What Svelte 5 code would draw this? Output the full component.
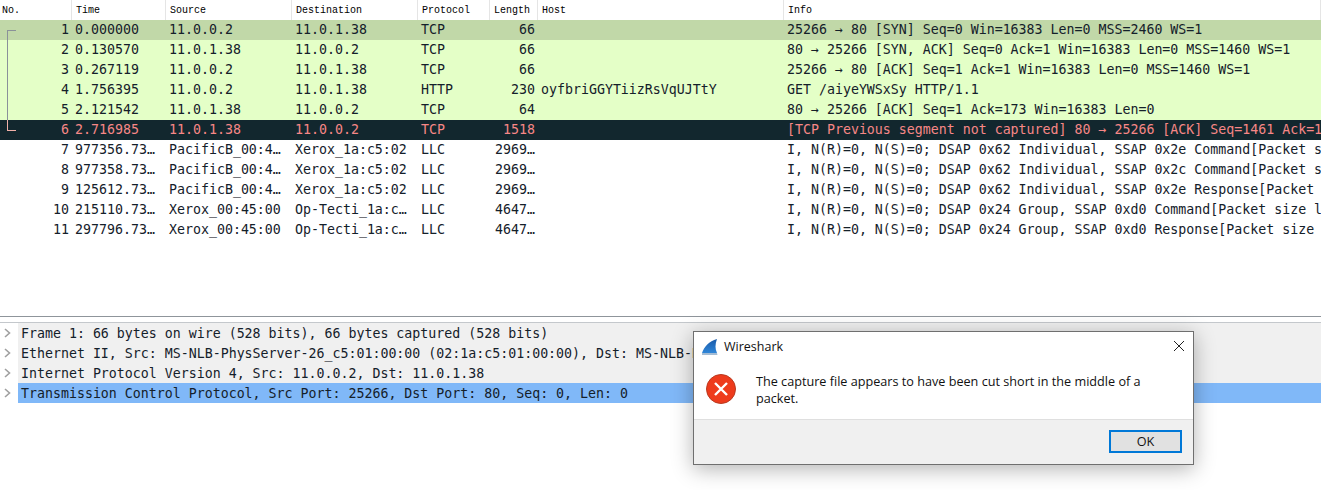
<script>
  const columns = [
    { label: 'No.', width: 72 },
    { label: 'Time', width: 94 },
    { label: 'Source', width: 126 },
    { label: 'Destination', width: 126 },
    { label: 'Protocol', width: 72 },
    { label: 'Length', width: 48 },
    { label: 'Host', width: 246 },
    { label: 'Info', width: 537 }
  ]

  const packets = [
    { no: 1, time: '0.000000', src: '11.0.0.2', dst: '11.0.1.38', proto: 'TCP', len: '66', host: '', info: '25266 → 80 [SYN] Seq=0 Win=16383 Len=0 MSS=2460 WS=1', kind: 'selected' },
    { no: 2, time: '0.130570', src: '11.0.1.38', dst: '11.0.0.2', proto: 'TCP', len: '66', host: '', info: '80 → 25266 [SYN, ACK] Seq=0 Ack=1 Win=16383 Len=0 MSS=1460 WS=1', kind: 'green' },
    { no: 3, time: '0.267119', src: '11.0.0.2', dst: '11.0.1.38', proto: 'TCP', len: '66', host: '', info: '25266 → 80 [ACK] Seq=1 Ack=1 Win=16383 Len=0 MSS=1460 WS=1', kind: 'green' },
    { no: 4, time: '1.756395', src: '11.0.0.2', dst: '11.0.1.38', proto: 'HTTP', len: '230', host: 'oyfbriGGYTiizRsVqUJTtY', info: 'GET /aiyeYWSxSy HTTP/1.1', kind: 'green' },
    { no: 5, time: '2.121542', src: '11.0.1.38', dst: '11.0.0.2', proto: 'TCP', len: '64', host: '', info: '80 → 25266 [ACK] Seq=1 Ack=173 Win=16383 Len=0', kind: 'green' },
    { no: 6, time: '2.716985', src: '11.0.1.38', dst: '11.0.0.2', proto: 'TCP', len: '1518', host: '', info: '[TCP Previous segment not captured] 80 → 25266 [ACK] Seq=1461 Ack=173 Win=16383 Len=1460', kind: 'bad' },
    { no: 7, time: '977356.73…', src: 'PacificB_00:4…', dst: 'Xerox_1a:c5:02', proto: 'LLC', len: '2969…', host: '', info: 'I, N(R)=0, N(S)=0; DSAP 0x62 Individual, SSAP 0x2e Command[Packet size limited during capture]', kind: '' },
    { no: 8, time: '977358.73…', src: 'PacificB_00:4…', dst: 'Xerox_1a:c5:02', proto: 'LLC', len: '2969…', host: '', info: 'I, N(R)=0, N(S)=0; DSAP 0x62 Individual, SSAP 0x2c Command[Packet size limited during capture]', kind: '' },
    { no: 9, time: '125612.73…', src: 'PacificB_00:4…', dst: 'Xerox_1a:c5:02', proto: 'LLC', len: '2969…', host: '', info: 'I, N(R)=0, N(S)=0; DSAP 0x62 Individual, SSAP 0x2e Response[Packet size limited during capture]', kind: '' },
    { no: 10, time: '215110.73…', src: 'Xerox_00:45:00', dst: 'Op-Tecti_1a:c…', proto: 'LLC', len: '4647…', host: '', info: 'I, N(R)=0, N(S)=0; DSAP 0x24 Group, SSAP 0xd0 Command[Packet size limited during capture]', kind: '' },
    { no: 11, time: '297796.73…', src: 'Xerox_00:45:00', dst: 'Op-Tecti_1a:c…', proto: 'LLC', len: '4647…', host: '', info: 'I, N(R)=0, N(S)=0; DSAP 0x24 Group, SSAP 0xd0 Response[Packet size limited during capture]', kind: '' }
  ]

  const details = [
    'Frame 1: 66 bytes on wire (528 bits), 66 bytes captured (528 bits)',
    'Ethernet II, Src: MS-NLB-PhysServer-26_c5:01:00:00 (02:1a:c5:01:00:00), Dst: MS-NLB-PhysServer-26_c5:01:00:00',
    'Internet Protocol Version 4, Src: 11.0.0.2, Dst: 11.0.1.38',
    'Transmission Control Protocol, Src Port: 25266, Dst Port: 80, Seq: 0, Len: 0'
  ]
</script>

<div class="window">
  <section class="list">
    <div class="grid head">
      {#each columns as col}
        <div class="th" style="width: {col.width}px">{col.label}</div>
      {/each}
    </div>
    {#each packets as p}
      <div class="grid row {p.kind}">
        <div class="td num" style="width: 72px">
          {#if p.no === 1}<span class="conv first"></span>{/if}
          {#if p.no > 1 && p.no < 6}<span class="conv mid"></span>{/if}
          {#if p.no === 6}<span class="conv last"></span>{/if}
          {p.no}
        </div>
        <div class="td" style="width: 94px">{p.time}</div>
        <div class="td" style="width: 126px">{p.src}</div>
        <div class="td" style="width: 126px">{p.dst}</div>
        <div class="td" style="width: 72px">{p.proto}</div>
        <div class="td len" style="width: 48px">{p.len}</div>
        <div class="td" style="width: 246px">{p.host}</div>
        <div class="td" style="width: 537px">{p.info}</div>
      </div>
    {/each}
  </section>

  <div class="splitter"></div>

  <section class="details">
    {#each details as line, i}
      <div class="detail">
        <svg class="arrow" width="18" height="20" viewBox="0 0 18 20">
          <path d="M5 6l4.500 4-4.500 4" fill="none" stroke="#a0a0a0" stroke-width="1.600" />
        </svg>
        <div class="detail-text" class:active={i === 3}>{line}</div>
      </div>
    {/each}
  </section>

  <div class="dialog">
    <div class="titlebar">
      <svg class="fin" width="16" height="16" viewBox="0 0 16 16">
        <defs>
          <linearGradient id="finfill" x1="0" y1="0" x2="0" y2="1">
            <stop offset="0" stop-color="#1a5aa8" />
            <stop offset="1" stop-color="#2f86d8" />
          </linearGradient>
        </defs>
        <path d="M0 14C2 8 7 2 15 0C13 5 13 10 15 14Z" fill="url(#finfill)" />
        <path d="M0 14H15L15.500 16H0Z" fill="#a4bcd4" />
      </svg>
      <span>Wireshark</span>
      <svg class="close" width="12" height="12" viewBox="0 0 12 12">
        <path d="M1 1l10 10M11 1L1 11" stroke="#222" stroke-width="1" fill="none" />
      </svg>
    </div>
    <div class="body">
      <svg class="err" width="32" height="32" viewBox="0 0 32 32">
        <circle cx="16" cy="16" r="14.500" fill="#ee3b1c" stroke="#b93a20" stroke-width="1" />
        <path d="M10 10l12 12M22 10L10 22" stroke="#fff" stroke-width="2.400" fill="none" />
      </svg>
      <p>The capture file appears to have been cut short in the middle of a packet.</p>
    </div>
    <div class="footer">
      <div class="ok">OK</div>
    </div>
  </div>
</div>

<style>
  :global(body) {
    margin: 0;
    background: #fff;
  }
  .window {
    position: relative;
    width: 1321px;
    height: 490px;
    overflow: hidden;
    font-family: "DejaVu Sans Mono", "Liberation Mono", monospace;
    font-size: 13.280px;
    color: #14202a;
  }
  .list {
    height: 316px;
  }
  .grid {
    display: flex;
    height: 20px;
    white-space: nowrap;
  }
  .th {
    box-sizing: border-box;
    flex: none;
    padding-left: 4px;
    font-family: "Liberation Mono", monospace;
    font-size: 10px;
    line-height: 21px;
    color: #000;
    border-right: 1px solid #e5e5e5;
  }
  .th:first-child {
    padding-left: 2px;
  }
  .td {
    position: relative;
    box-sizing: border-box;
    flex: none;
    overflow: hidden;
    padding-left: 3px;
    line-height: 20px;
  }
  .num,
  .len {
    padding: 0 3px 0 0;
    text-align: right;
  }
  .row.green {
    background: #e4ffc7;
  }
  .row.selected {
    background: #c1d8a8;
  }
  .row.bad {
    background: #12272e;
    color: #f78787;
  }
  .conv {
    position: absolute;
    left: 7px;
    border-left: 1px solid #8a9199;
  }
  .conv.first {
    top: 10px;
    bottom: 0;
    width: 8px;
    border-top: 1px solid #8a9199;
  }
  .conv.mid {
    top: 0;
    bottom: 0;
  }
  .conv.last {
    top: 0;
    height: 10px;
    width: 8px;
    border-left-color: #f0b0a8;
    border-bottom: 1px solid #f0b0a8;
  }
  .splitter {
    height: 5px;
    border-top: 1px solid #8f959b;
    border-bottom: 1px solid #c4c8cc;
  }
  .detail {
    display: flex;
    height: 20px;
    white-space: nowrap;
  }
  .arrow {
    flex: none;
  }
  .detail-text {
    flex: 1;
    box-sizing: border-box;
    min-width: 0;
    padding: 1px 0 0 3px;
    line-height: 20px;
    background: #f0f0f0;
  }
  .detail-text.active {
    background: #80b8f8;
  }
  .dialog {
    position: absolute;
    left: 693px;
    top: 331px;
    width: 501px;
    height: 134px;
    box-sizing: border-box;
    display: flex;
    flex-direction: column;
    border: 1px solid #6f6f6f;
    background: #fff;
    box-shadow: 0 4px 20px rgba(0, 0, 0, 0.3);
    font-family: "Open Sans", "Liberation Sans", sans-serif;
    font-size: 12.650px;
    color: #111;
  }
  .titlebar {
    position: relative;
    display: flex;
    align-items: center;
    gap: 6px;
    height: 29px;
    padding-left: 8px;
    font-size: 12.500px;
  }
  .close {
    position: absolute;
    right: 8px;
    top: 8px;
  }
  .body {
    flex: 1;
    display: flex;
    gap: 19px;
    padding: 12px 0 0 11px;
  }
  .err {
    flex: none;
  }
  .body p {
    margin: 0;
    width: 395px;
    line-height: 17px;
  }
  .footer {
    display: flex;
    justify-content: flex-end;
    align-items: center;
    box-sizing: border-box;
    height: 45px;
    padding: 0 11px 2px 0;
    background: #f0f0f0;
    border-top: 1px solid #dfdfdf;
  }
  .ok {
    box-sizing: border-box;
    width: 73px;
    height: 23px;
    line-height: 19px;
    text-align: center;
    background: #e1e1e1;
    border: 2px solid #0078d7;
  }
</style>
